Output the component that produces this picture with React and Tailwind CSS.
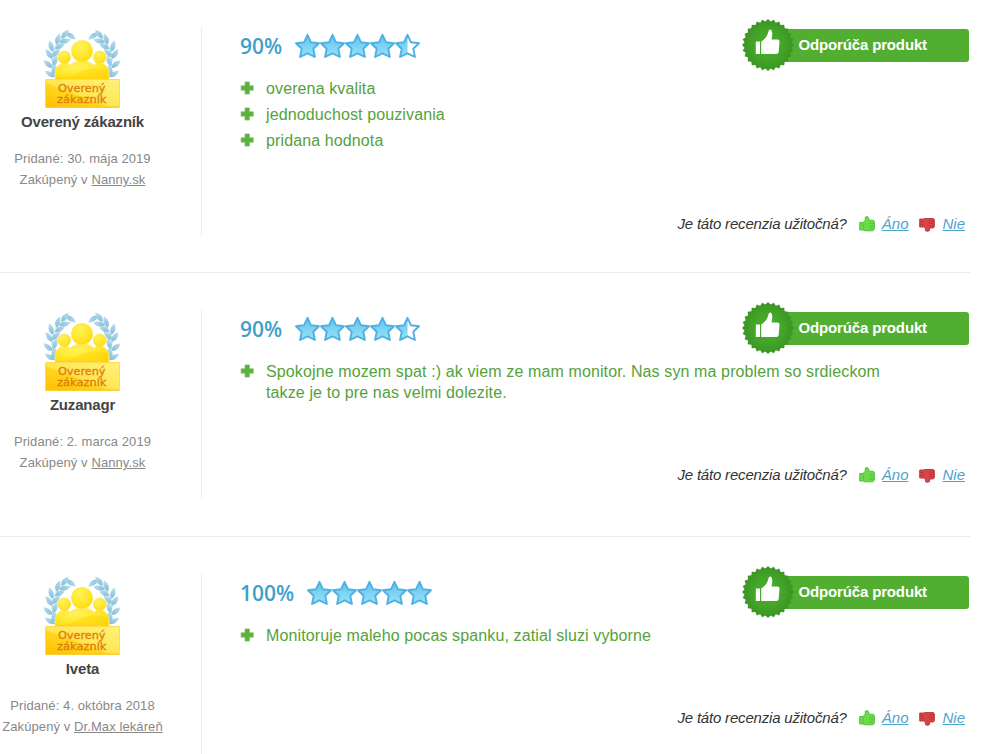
import React from "react";

const leaves = [
  [71, 36, 35], [65, 34, -50], [65, 41, -15], [58, 39, -70], [60, 46, -30],
  [51, 46, -105], [56, 53, -45], [49, 54, -125], [55, 61, -70], [48, 64, -140],
  [54, 70, -80], [50, 74, -150],
];

function Laurel() {
  return (
    <g fill="url(#leaf)">
      {leaves.map(([x, y, r], i) => (
        <path key={i} d="M-6 0Q-1 -5 6 0Q-1 5 -6 0Z" transform={`translate(${x} ${y}) rotate(${r})`} />
      ))}
      <path d="M69 34Q52 44 52 60Q53 70 57 78" fill="none" stroke="#a9d3e6" strokeWidth="1" />
    </g>
  );
}

function Badge() {
  return (
    <svg viewBox="40 26 84 84" className="block h-[84px] w-[84px]">
      <defs>
        <linearGradient id="leaf" gradientUnits="userSpaceOnUse" x1="-6" y1="0" x2="6" y2="0">
          <stop offset="0" stopColor="#7fbcd8" />
          <stop offset="1" stopColor="#bfe0ee" />
        </linearGradient>
        <radialGradient id="gold" cx="0.4" cy="0.3" r="0.8">
          <stop offset="0" stopColor="#fff25a" />
          <stop offset="0.5" stopColor="#ffe92e" />
          <stop offset="1" stopColor="#ffd60e" />
        </radialGradient>
        <linearGradient id="plate" x1="0" y1="1" x2="1" y2="0">
          <stop offset="0" stopColor="#ffbe00" />
          <stop offset="0.42" stopColor="#ffd61c" />
          <stop offset="0.46" stopColor="#ffe650" />
          <stop offset="1" stopColor="#fff27a" />
        </linearGradient>
      </defs>
      <Laurel />
      <g transform="translate(164 0) scale(-1 1)"><Laurel /></g>
      <g fill="url(#gold)" stroke="#ffe98a" strokeWidth="0.5">
        <path d="M55 80V73Q55 66 61 64Q62 63 61 61H68Q67 64 70 65Q73 62 78 61H86Q91 62 94 65Q97 64 96 61H103Q102 63 103 64Q109 66 109 73V80Z" />
        <circle cx="64.3" cy="57.3" r="6.5" />
        <circle cx="99.7" cy="57.3" r="6.5" />
        <circle cx="82" cy="51" r="10.8" />
      </g>
      <path d="M56 80V77Q70 79 80 72Q90 66 108 70V80Z" fill="#ffd000" opacity="0.4" />
      <rect x="45.5" y="79.5" width="74" height="28" rx="0.5" fill="url(#plate)" stroke="#ffdb55" />
      <path d="M46 107H119" stroke="#f8c220" />
      <g fill="#e07c10" stroke="#e07c10" strokeWidth="0.3" fontFamily="'DejaVu Sans', sans-serif" fontSize="11">
        <text x="58" y="91.5" textLength="47.5" lengthAdjust="spacingAndGlyphs">Overený</text>
        <text x="57" y="102.5" textLength="49.5" lengthAdjust="spacingAndGlyphs">zákazník</text>
      </g>
    </svg>
  );
}

const STAR = "M12.5 1.8L15.9 9.2L24 10.2L18.3 15.8L19.9 24L12.5 20.3L5.1 24L6.7 15.8L1 10.2L9.1 9.2Z";

function Star({ half }) {
  return (
    <svg viewBox="0 0 25 26" className="block h-[26px] w-[25px]">
      <defs>
        <linearGradient id="sky" x1="0" y1="0" x2="0" y2="1">
          <stop offset="0" stopColor="#62c3ee" />
          <stop offset="1" stopColor="#97e2fa" />
        </linearGradient>
        <clipPath id="left-half"><rect width="12.5" height="26" /></clipPath>
      </defs>
      <path d={STAR} fill={half ? "#fff" : "url(#sky)"} />
      {half && <path d={STAR} fill="url(#sky)" clipPath="url(#left-half)" />}
      <path d={STAR} fill="none" stroke="#4fb1e2" strokeWidth="1.9" strokeLinejoin="round" />
    </svg>
  );
}

const teeth = Array.from({ length: 56 }, (_, i) => {
  const r = i % 2 ? 23.6 : 26;
  const a = (i * Math.PI) / 28;
  return `${(26 + r * Math.sin(a)).toFixed(2)},${(26 - r * Math.cos(a)).toFixed(2)}`;
}).join(" ");

function Recommend() {
  return (
    <div className="flex h-[52px] w-[227px] items-center">
      <svg viewBox="0 0 52 52" className="relative z-10 block h-[52px] w-[52px] shrink-0">
        <defs>
          <radialGradient id="seal">
            <stop offset="0" stopColor="#4cb02d" />
            <stop offset="0.6" stopColor="#43a428" />
            <stop offset="1" stopColor="#3a9424" />
          </radialGradient>
        </defs>
        <polygon points={teeth} fill="url(#seal)" />
        <path d="M13.8 22.5H18V35H13.8Z" fill="#fff" />
        <path d="M19.2 22.5Q25 19 26.3 13Q26.8 10 28.6 10.6Q31.5 12 29.5 20.5H35.5Q37.7 20.5 37.5 23L36.7 33Q36.4 35 34.2 35H19.2Z" fill="#fff" />
      </svg>
      <div className="-ml-5 flex h-[33px] flex-1 items-center rounded-r-[3px] bg-[#52ae30] pl-[24.5px] text-[15px] font-bold tracking-[-0.15px] text-white">
        <span className="whitespace-nowrap">Odporúča produkt</span>
      </div>
    </div>
  );
}

function Plus() {
  return (
    <svg viewBox="0 0 14 14" className="mt-[3px] block h-[14px] w-[14px] shrink-0">
      <path d="M5 0.9H9.4V4.8H13.3V9.2H9.4V13.1H5V9.2H1.1V4.8H5Z" fill="#5bb13c" stroke="#7cc262" strokeWidth="0.7" strokeLinejoin="round" />
    </svg>
  );
}

function ThumbUp() {
  return (
    <svg viewBox="0 0 16 16" className="block h-4 w-4">
      <path d="M0.7 6.5H4L6.3 4V1Q8.8 -0.2 9.8 2V4.2H14.3L15.4 5.5V13L14 14.8H6L4 14H0.7Z" fill="#6bdb48" stroke="#4fba38" strokeWidth="0.9" />
      <path d="M4.2 7V13.4M10 7.3H15M10 9.8H15M10 12.2H14.5" stroke="#4cbd32" strokeWidth="0.7" />
    </svg>
  );
}

function ThumbDown() {
  return (
    <svg viewBox="0 0 16 16" className="block h-4 w-4">
      <path d="M0.7 3H5L6 2.5H14.3L15.4 3.5V10.8L14.3 12H10.6V14.4Q9 16 6.5 14.8V12.5L4.5 11H0.7Z" fill="#d64646" stroke="#be3232" strokeWidth="0.9" />
      <path d="M1 5.5H5M1 8.2H5M10 5H15M10 7.4H15M10 9.6H14.5" stroke="#b52d2d" strokeWidth="0.7" />
    </svg>
  );
}

function Review({ name, date, shop, percent, stars, points, className, last }) {
  return (
    <article className={`flex w-[970px] ${className}`}>
      <aside className="w-[202px] shrink-0 border-r border-[#ececec] text-center">
        <div className="-mt-px flex w-[164px] justify-center"><Badge /></div>
        <h3 className="mt-0.5 w-[165px] text-[15px] font-bold leading-[20px] tracking-[-0.18px] text-[#444]">{name}</h3>
        <div className="mt-4 w-[165px] whitespace-nowrap text-[13px] leading-[21px] tracking-[0.09px] text-[#888]">
          <p>Pridané: {date}</p>
          <p>Zakúpený v <a className="underline">{shop}</a></p>
        </div>
      </aside>
      <div className="flex flex-1 flex-col pl-[38px]">
        <div className="-mt-2 flex h-[52px] items-center justify-between pr-px">
          <div className="flex items-center">
            <span className="mr-[12.4px] pt-0.5 font-['Open_Sans'] text-[21px] font-semibold leading-[26px] text-[#3f9fca]">{percent}</span>
            <div className="flex pt-0.5">
              {[0, 1, 2, 3, 4].map((i) => <Star key={i} half={i + 1 > stars} />)}
            </div>
          </div>
          <Recommend />
        </div>
        <ul className="mt-[7px] text-[16px] leading-[21px] tracking-[0.12px] text-[#55a23b]">
          {points.map((p) => (
            <li key={p} className="mb-[5px] flex">
              <Plus /><span className="ml-3 w-[640px]">{p}</span>
            </li>
          ))}
        </ul>
        <div className={`flex items-center justify-end pr-[5px] text-[15px] italic leading-[20px] text-[#333] ${last}`}>
          <span className="mr-3 tracking-[-0.19px]">Je táto recenzia užitočná?</span>
          <ThumbUp />
          <a className="ml-[7px] mr-[11px] text-[#4fa3cb] underline">Áno</a>
          <ThumbDown />
          <a className="ml-[7px] text-[#4fa3cb] underline">Nie</a>
        </div>
      </div>
    </article>
  );
}

export default function App() {
  return (
    <main className="h-[754px] w-[985px] overflow-hidden bg-white font-['Liberation_Sans',Arial,sans-serif]">
      <div className="h-[273px] w-[970px] border-b border-[#ececec] pt-[27px]">
        <Review className="h-[209px]" name="Overený zákazník" date="30. mája 2019" shop="Nanny.sk" percent="90%" stars={4.5}
          points={["overena kvalita", "jednoduchost pouzivania", "pridana hodnota"]} last="mt-[58px]" />
      </div>
      <div className="h-[264px] w-[970px] border-b border-[#ececec] pt-[37px]">
        <Review className="h-[188px]" name="Zuzanagr" date="2. marca 2019" shop="Nanny.sk" percent="90%" stars={4.5}
          points={["Spokojne mozem spat :) ak viem ze mam monitor. Nas syn ma problem so srdieckom takze je to pre nas velmi dolezite."]} last="mt-[57px]" />
      </div>
      <div className="pt-[37px]">
        <Review className="h-[188px]" name="Iveta" date="4. októbra 2018" shop="Dr.Max lekáreň" percent="100%" stars={5}
          points={["Monitoruje maleho pocas spanku, zatial sluzi vyborne"]} last="mt-[57px]" />
      </div>
    </main>
  );
}
